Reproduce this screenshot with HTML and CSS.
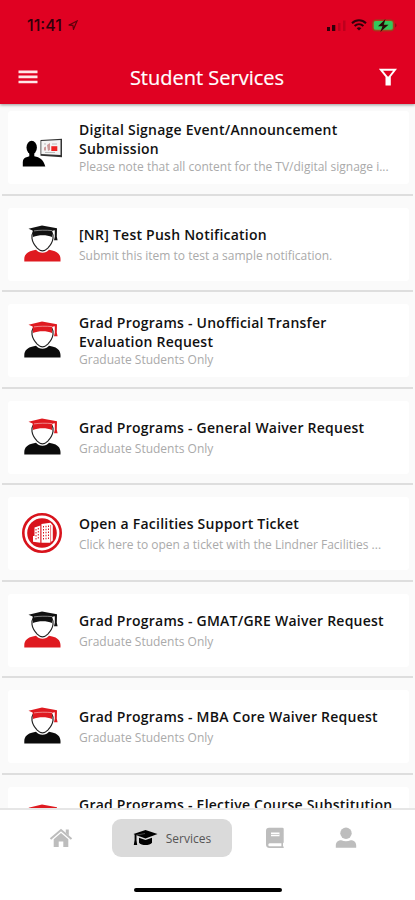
FILE: index.html
```html
<!DOCTYPE html>
<html lang="en">
    <head>
        <meta charset="utf-8">
        <title>Student Services</title>
        <link rel="stylesheet" href="styles.css">
    </head>
    <body>
        <!-- shared icons -->
        <svg class="sprite">
            <symbol id="grad" viewBox="0 0 40 40">
                <path class="body" d="M2.300 37.600V35c0-4.500 3.500-7.600 8.500-8.500l3.200-.7c1.500 2 4 3 6.500 3s5-1 6.500-3l3.200.7c5 .9 8.300 4 8.300 8.500v2.600z"/>
                <path class="face" d="M11 8.500c-1.300 2-1.500 4-1 6 .5 3.500 3 7.300 5.200 9.600 1.500 1.500 3.200 2.700 5.300 2.700s3.800-1.200 5.300-2.700c2.200-2.300 4.700-6.100 5.200-9.600.5-2 .3-4-1-6z"/>
                <path class="cap" d="M6.500 4.700 20 1.600l15 2.600-.2 8.600.8 3.400h-3.600l.8-3.400V6.200L30.300 6.700l-.3 6.300c-5-2.500-13.500-2.500-19 0L10.600 6.500z"/>
                <path class="shine" d="M12 6.900c5-.8 12-.9 18-.3"/>
            </symbol>
            <symbol id="signage" viewBox="0 0 40 40">
                <ellipse cx="9.700" cy="20.500" rx="5.200" ry="6.800"/>
                <path d="M.8 39.500V35c0-3 2-4.500 4.500-5l2-.8v-4h5v4l3 .8c3.500 1 6.500 4 8 9.500z"/>
                <path d="m18.500 13 21.500-1.200v18.500l-21.500-1.600z" fill="#333"/>
                <path d="m19.300 14 19.200-1v15l-19.200-1.100z" fill="#f4f4f4"/>
                <path d="M22 23.500v-3l2-1v4zM25 18l3-2v7l-2 1z" fill="#c99"/>
                <path d="M29.300 19.200h6V24h-6z" fill="#e22"/>
                <path d="M22 17h2M30 17h5M23 25.500h10" stroke="#bbb"/>
            </symbol>
            <symbol id="facilities" viewBox="0 0 40 40">
                <circle cx="20" cy="20" r="18.700" fill="#fff" stroke="#d8131c" stroke-width="2.600"/>
                <circle cx="20" cy="20" r="14.800" fill="#d8131c"/>
                <path d="m12.500 14.500 6-2v17.300l-7.500-1V23h1.500zM19.300 11l9.200-1.300 2.300 2.800v15l-3 2.300h-8.500z" fill="#fff"/>
                <path d="M14 16v11M16.300 15v12M21.500 13v14M24 12.800V27M26.500 12.500V27" stroke="#d8131c" stroke-dasharray="1.500 1.500"/>
                <path d="M18.900 11v19M28.600 12v17" stroke="#d8131c" stroke-width=".6"/>
            </symbol>
        </svg>

        <header class="header">
            <div class="status">
                <span class="time">11:41</span>
                <svg class="location" viewBox="0 0 10 10"><path d="M.7 5.200 9 1 5.500 9.300l-.6-4z"/></svg>
                <svg class="signal" viewBox="0 0 20 11">
                    <path d="M1 7h3v4H1zM6 5h3.300v6H6z"/>
                    <path d="M12 3h2.500v8H12zM17 .5h2.500V11H17z" opacity=".2"/>
                </svg>
                <svg class="wifi" viewBox="0 0 16 12">
                    <path d="M1 4.300c4-4 10-4 14 0M3.600 7c2.600-2.400 6.200-2.400 8.800 0"/>
                    <path class="dot" d="M5.700 9.200c1.400-1.200 3.200-1.200 4.600 0L8 11.500z"/>
                </svg>
                <svg class="battery" viewBox="0 0 25 13">
                    <rect x=".6" y=".9" width="21.300" height="11" rx="3" fill="#c4371f" stroke="#8b4a1c" stroke-width=".9"/>
                    <rect x="1.800" y="2" width="19" height="8.800" rx="1.800" fill="#35c75a"/>
                    <path d="M23.300 4.300c1.500.7 1.500 3.500 0 4.200z" fill="#701018"/>
                    <path d="M13.500 0 6 7.200h4.500L8.300 13 16.500 5.800h-4.700z" fill="#2a0808"/>
                </svg>
            </div>
            <div class="titlebar">
                <svg class="menu" viewBox="0 0 20 14"><path d="M.5 1.800h19M.5 6.900h19M.5 12h19"/></svg>
                <h1>Student Services</h1>
                <svg class="filter" viewBox="0 0 18 18"><path d="M2 1.800h14l-5.200 6.700v8H7.500v-8z"/><path class="stem" d="M7.500 8.500h3.300v8H7.500z"/></svg>
            </div>
        </header>

        <ul class="list">
            <li>
                <div class="card">
                    <svg class="icon"><use href="#signage"/></svg>
                    <div class="text">
                        <h2>Digital Signage Event/Announcement Submission</h2>
                        <p>Please note that all content for the TV/digital signage i...</p>
                    </div>
                </div>
            </li>
            <li>
                <div class="card single">
                    <svg class="icon red-body"><use href="#grad"/></svg>
                    <div class="text">
                        <h2>[NR] Test Push Notification</h2>
                        <p>Submit this item to test a sample notification.</p>
                    </div>
                </div>
            </li>
            <li>
                <div class="card">
                    <svg class="icon red-cap"><use href="#grad"/></svg>
                    <div class="text">
                        <h2>Grad Programs - Unofficial Transfer Evaluation Request</h2>
                        <p>Graduate Students Only</p>
                    </div>
                </div>
            </li>
            <li>
                <div class="card single">
                    <svg class="icon red-cap"><use href="#grad"/></svg>
                    <div class="text">
                        <h2>Grad Programs - General Waiver Request</h2>
                        <p>Graduate Students Only</p>
                    </div>
                </div>
            </li>
            <li>
                <div class="card single">
                    <svg class="icon"><use href="#facilities"/></svg>
                    <div class="text">
                        <h2>Open a Facilities Support Ticket</h2>
                        <p>Click here to open a ticket with the Lindner Facilities ...</p>
                    </div>
                </div>
            </li>
            <li>
                <div class="card single">
                    <svg class="icon red-body"><use href="#grad"/></svg>
                    <div class="text">
                        <h2>Grad Programs - GMAT/GRE Waiver Request</h2>
                        <p>Graduate Students Only</p>
                    </div>
                </div>
            </li>
            <li>
                <div class="card single">
                    <svg class="icon red-cap"><use href="#grad"/></svg>
                    <div class="text">
                        <h2>Grad Programs - MBA Core Waiver Request</h2>
                        <p>Graduate Students Only</p>
                    </div>
                </div>
            </li>
            <li>
                <div class="card tall">
                    <svg class="icon red-cap"><use href="#grad"/></svg>
                    <div class="text">
                        <h2>Grad Programs - Elective Course Substitution</h2>
                    </div>
                </div>
            </li>
        </ul>

        <footer class="footer">
            <nav class="tabs">
                <a class="tab">
                    <svg width="24" height="20" viewBox="0 0 24 20">
                        <path d="M1.500 11 12 2l10.500 9" fill="none" stroke="#bdbdbd" stroke-width="2"/>
                        <path d="M16.800 1.500h3v6l-3-2.600zM4.700 11.300 12 5l7.300 6.300V19h-5v-5.500H9.700V19h-5z"/>
                    </svg>
                </a>
                <a class="tab active">
                    <svg width="25" height="18" viewBox="0 0 25 18">
                        <path d="M12.500 1 24.500 5 12.500 9.500 3.500 6.300v5l.7 4.700H.8l.8-5V5.600L.5 5z"/>
                        <path d="M6 8.700l6.500 2.300L19 8.700v5c-1 1.600-4 2.300-6.500 2.300S7 15.300 6 13.700z"/>
                        <path d="M3 6.300 12 4.500" stroke="#777" stroke-width=".6"/>
                    </svg>
                    <span>Services</span>
                </a>
                <a class="tab">
                    <svg width="20" height="22" viewBox="0 0 20 22">
                        <path fill-rule="evenodd" d="M4 .8h13.500q1.200 0 1.200 1.200v13.200q0 .7-.7 1v3.200h.7v1.500H4.500Q1 20.900 1 17.500V4Q1 .8 4 .8zM6 5.500v3.800h8.500V5.500zM4.700 16.300q-1.400 0-1.400 1.500t1.400 1.500h11.700v-3z"/>
                        <path d="M6 7.100h8.500v.7H6z"/>
                    </svg>
                </a>
                <a class="tab">
                    <svg width="22" height="22" viewBox="0 0 22 22">
                        <circle cx="11" cy="6.200" r="5.700"/>
                        <path d="M.8 20.700v-2.200c0-3.300 2.500-5.200 5.500-5.200 3 1.200 6.400 1.200 9.400 0 3 0 5.500 1.900 5.500 5.200v2.200z"/>
                    </svg>
                </a>
            </nav>
            <div class="home-bar"></div>
        </footer>
    </body>
</html>
```
FILE: styles.css
```css
*{box-sizing: border-box;}
body{margin:0; height:900px; display:flex; flex-direction:column; overflow:hidden; background:#fafafa; font-family:"Open Sans", sans-serif;}
svg{display:block; flex:none;}
h1,h2,p,ul{margin:0; padding:0;}
.sprite{display:none;}

.header{height:104px; flex:none; background:#e00122; box-shadow:0 1px 3px rgba(0,0,0,0.4); position:relative;}
.status{height:50px; padding:0 18px 0 27px; display:flex; align-items:center;}
.time{font:500 16px Inter, sans-serif; color:#30000a; width:38px;}
.location{width:10px; height:10px; margin-left:3px; fill:none; stroke:#60000c; stroke-width:1.200;}
.signal{width:20px; height:11px; margin-left:auto; fill:#30000a;}
.wifi{width:16px; height:12px; margin:0 5px 0 5px; fill:none; stroke:#30000a; stroke-width:2;}
.wifi .dot{fill:#30000a; stroke:none;}
.battery{width:25px; height:13px;}
.titlebar{height:54px; padding:0 18px; display:flex; align-items:center; justify-content:space-between;}
.titlebar h1{font-size:20px; font-weight:400; color:#fff; margin-right:3px; -webkit-text-stroke:0.2px #fff;}
.menu{width:20px; height:14px; stroke:#ffe6e8; stroke-width:2.700;}
.filter{width:18px; height:18px; fill:none; stroke:#fff; stroke-width:2;}
.filter .stem{fill:#fff; stroke:none;}

.list{flex:1; min-height:0; overflow:hidden; list-style:none;}
.list li{height:96.600px; padding:12px 4px 0 6px; margin:0 2px; border-bottom:2px solid #dedede;}
.list li:first-child{height:91.500px; padding-top:7px;}
.card{height:73px; padding:0 10px 0 14px; background:#fff; border-radius:3px; display:flex; align-items:center;}
.icon{width:40px; height:40px; margin:0 17px 1px 0;}
.text{flex:1; min-width:0; padding-top:1px;}
.text h2{font-size:14px; line-height:19px; font-weight:600; color:#111; letter-spacing:0.240px;}
.text p{font-size:12px; line-height:18px; color:#aaa; white-space:nowrap;}
.single h2{margin-bottom:3px;}
.tall h2{min-height:58px; white-space:nowrap;}

.red-body{--body:#df1a20; --cap:#111;}
.red-cap{--body:#0b0b0b; --cap:#df1a20;}
.body{fill:var(--body);}
.cap{fill:var(--cap);}
.face{fill:#fff; stroke:#222; stroke-width:1.200;}
.shine{fill:none; stroke:#fff; stroke-width:0.800; opacity:0.6;}

.footer{height:92px; flex:none; background:#fff; border-top:2px solid #e6e6e6; position:relative;}
.tabs{height:56px; padding:0 33px; display:flex; align-items:center;}
.tab{width:56px; margin-right:23px; display:flex; justify-content:center; fill:#bdbdbd;}
.tab:last-child{margin-right:0; margin-left:-8px;}
.tab.active{width:120px; height:38px; margin-right:15px; border-radius:9px; background:#dadada; align-items:center; fill:#000; font-size:12px; color:#555;}
.tab.active span{margin-left:8px;}
.home-bar{width:148px; height:4px; margin:22px auto 0; border-radius:2px; background:#000;}
```
